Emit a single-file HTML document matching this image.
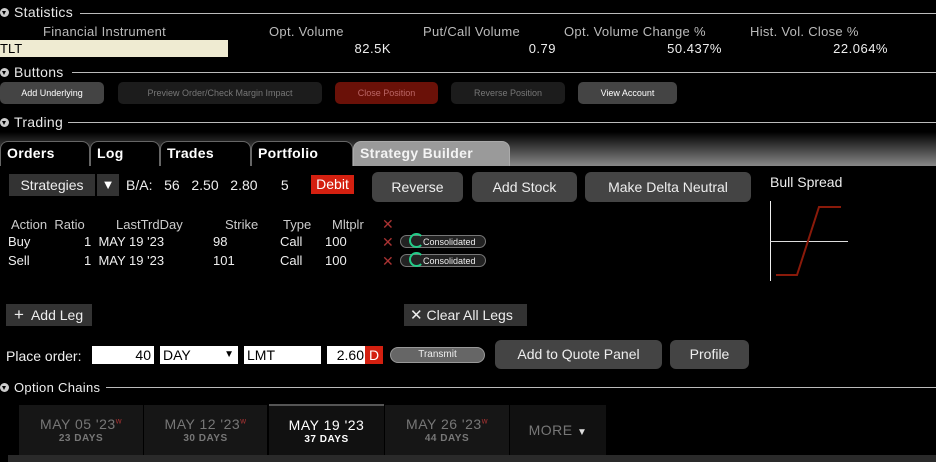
<!DOCTYPE html>
<html><head><style>
body{margin:0;width:936px;height:462px;background:#000;overflow:hidden;font-family:"Liberation Sans","DejaVu Sans",sans-serif;color:#ddd;position:relative}
.a{position:absolute;white-space:nowrap}
.hd{font-size:14px;color:#e8e8e8;letter-spacing:0.3px}
.tri{position:absolute;width:9px;height:9px;border-radius:50%;background:#ccc}
.tri:after{content:"";position:absolute;left:2px;top:3px;border-left:2.5px solid transparent;border-right:2.5px solid transparent;border-top:4px solid #000}
.ln{position:absolute;height:1px;background:#bbb}
.ch{font-size:13px;color:#bbb;letter-spacing:0.3px}
.val{font-size:13px;color:#eee;text-align:right;letter-spacing:0.5px}
.b1{position:absolute;height:22px;top:82px;border-radius:5px;font-size:9px;text-align:center;line-height:22px}
.tab{position:absolute;top:141px;height:25px;background:#000;border:1px solid #666;border-bottom:none;border-radius:8px 8px 0 0;font-weight:bold;font-size:14px;color:#fff;line-height:22px;padding-left:6px;box-sizing:border-box;letter-spacing:0.3px}
.rb{position:absolute;background:#444;border-radius:6px;font-size:14px;color:#eee;text-align:center}
.t{font-size:13px;color:#eee}
.cons{position:absolute;width:86px;height:13px;border-radius:7px;background:#222;border:1px solid #777;font-size:9px;color:#eee;line-height:13px;text-indent:22px;box-sizing:border-box}
.cons:before{content:"";position:absolute;left:8px;top:-3px;width:11px;height:11px;border:2px solid #2c8;border-radius:50%;border-right-color:transparent}
.x{position:absolute;color:#a33;font-size:14px;font-weight:bold}
.inp{position:absolute;top:346px;height:18px;background:#fff;color:#000;font-size:14px;line-height:18px;box-sizing:border-box}
.dt{position:absolute;top:405px;height:50px;background:#161616;text-align:center;color:#777}
.dt b{display:block;font-weight:normal;font-size:14px;margin-top:11px;letter-spacing:0.5px}
.dt i{display:block;font-style:normal;font-size:10px;margin-top:1px;font-weight:bold;letter-spacing:0.5px}
.dt sup{color:#a33;font-size:8px}
</style></head><body>
<div class="tri" style="left:0;top:8px"></div><div class="a hd" style="left:14px;top:4px">Statistics</div><div class="ln" style="left:80px;right:0;top:13px"></div>
<div class="a ch" style="left:43px;top:24px">Financial Instrument</div>
<div class="a ch" style="left:269px;top:24px">Opt. Volume</div>
<div class="a ch" style="left:423px;top:24px">Put/Call Volume</div>
<div class="a ch" style="left:564px;top:24px">Opt. Volume Change %</div>
<div class="a ch" style="left:750px;top:24px">Hist. Vol. Close %</div>
<div class="a" style="left:0;top:40px;width:228px;height:17px;background:#efebd2;color:#000;font-size:13px;line-height:17px">TLT</div>
<div class="a val" style="right:545px;top:41px">82.5K</div>
<div class="a val" style="right:380px;top:41px">0.79</div>
<div class="a val" style="right:214px;top:41px">50.437%</div>
<div class="a val" style="right:48px;top:41px">22.064%</div>
<div class="tri" style="left:0;top:68px"></div><div class="a hd" style="left:14px;top:64px">Buttons</div><div class="ln" style="left:72px;right:0;top:72px"></div>
<div class="b1" style="left:0;width:104px;background:#444;color:#fff">Add Underlying</div>
<div class="b1" style="left:118px;width:204px;background:#1c1c1c;color:#777">Preview Order/Check Margin Impact</div>
<div class="b1" style="left:335px;width:103px;background:#6a1108;color:#b66">Close Position</div>
<div class="b1" style="left:451px;width:114px;background:#1c1c1c;color:#777">Reverse Position</div>
<div class="b1" style="left:578px;width:99px;background:#444;color:#fff">View Account</div>
<div class="a" style="left:0;top:126px;width:936px;height:40px;background:linear-gradient(#000 0,#000 15%,#888)"></div>
<div class="tri" style="left:0;top:118px"></div><div class="a hd" style="left:14px;top:114px">Trading</div><div class="ln" style="left:68px;right:0;top:122px"></div>
<div class="tab" style="left:0;width:90px">Orders</div>
<div class="tab" style="left:90px;width:70px">Log</div>
<div class="tab" style="left:160px;width:91px">Trades</div>
<div class="tab" style="left:251px;width:102px">Portfolio</div>
<div class="tab" style="left:353px;width:157px;background:#9a9a9a;border-color:#aaa;color:#f4f4f4">Strategy Builder</div>
<div class="a" style="left:0;top:166px;width:936px;height:2px;background:#000"></div>
<div class="a" style="left:9px;top:174px;width:86px;height:22px;background:#333;font-size:14px;line-height:22px;text-align:center;color:#eee">Strategies</div>
<div class="a" style="left:97px;top:174px;width:22px;height:22px;background:#333;font-size:13px;line-height:22px;text-align:center;color:#fff">▼</div>
<div class="a t" style="left:126px;top:177px;font-size:14px">B/A:&nbsp;&nbsp;&nbsp;56&nbsp;&nbsp;&nbsp;2.50&nbsp;&nbsp;&nbsp;2.80&nbsp;&nbsp;&nbsp;&nbsp;&nbsp;&nbsp;5</div>
<div class="a" style="left:311px;top:175px;width:43px;height:19px;background:#d42010;color:#fff;font-size:14px;line-height:19px;text-align:center">Debit</div>
<div class="rb" style="left:372px;top:172px;width:91px;height:30px;line-height:30px">Reverse</div>
<div class="rb" style="left:472px;top:172px;width:105px;height:30px;line-height:30px">Add Stock</div>
<div class="rb" style="left:585px;top:172px;width:166px;height:30px;line-height:30px">Make Delta Neutral</div>
<div class="a t" style="left:770px;top:174px;font-size:14px">Bull Spread</div>
<svg class="a" style="left:760px;top:195px" width="100" height="95"><line x1="10.5" y1="6" x2="10.5" y2="86" stroke="#eee"/><line x1="10" y1="46.5" x2="88" y2="46.5" stroke="#ddd"/><polyline points="16,80 37,80 59,12 81,12" fill="none" stroke="#8a1a0a" stroke-width="2"/></svg>
<div class="a t" style="left:11px;top:217px;color:#ccc">Action&nbsp; Ratio</div>
<div class="a t" style="left:116px;top:217px;color:#ccc">LastTrdDay</div>
<div class="a t" style="left:225px;top:217px;color:#ccc">Strike</div>
<div class="a t" style="left:283px;top:217px;color:#ccc">Type</div>
<div class="a t" style="left:332px;top:217px;color:#ccc">Mltplr</div>
<div class="x" style="left:382px;top:216px">✕</div>
<div class="a t" style="left:8px;top:234px">Buy</div><div class="a t" style="left:84px;top:234px">1&nbsp; MAY 19 '23</div><div class="a t" style="left:213px;top:234px">98</div><div class="a t" style="left:280px;top:234px">Call</div><div class="a t" style="left:325px;top:234px">100</div>
<div class="x" style="left:382px;top:234px">✕</div><div class="cons" style="left:400px;top:235px">Consolidated</div>
<div class="a t" style="left:8px;top:253px">Sell</div><div class="a t" style="left:84px;top:253px">1&nbsp; MAY 19 '23</div><div class="a t" style="left:213px;top:253px">101</div><div class="a t" style="left:280px;top:253px">Call</div><div class="a t" style="left:325px;top:253px">100</div>
<div class="x" style="left:382px;top:253px">✕</div><div class="cons" style="left:400px;top:254px">Consolidated</div>
<div class="a" style="left:6px;top:304px;width:86px;height:22px;background:#333;font-size:14px;line-height:22px;color:#eee;text-indent:8px"><span style="font-size:17px">+</span>&nbsp; Add Leg</div>
<div class="a" style="left:404px;top:304px;width:123px;height:22px;background:#333;font-size:14px;line-height:22px;color:#eee;text-indent:6px"><span style="font-size:15px">✕</span>&nbsp;Clear All Legs</div>
<div class="a t" style="left:6px;top:348px;font-size:14px">Place order:</div>
<div class="inp" style="left:92px;width:62px;text-align:right;padding-right:3px">40</div>
<div class="inp" style="left:160px;width:78px;padding-left:3px">DAY<span style="position:absolute;right:4px;top:0;font-size:10px">▼</span></div>
<div class="inp" style="left:244px;width:77px;padding-left:3px">LMT</div>
<div class="inp" style="left:327px;width:38px;text-align:right;padding-right:1px">2.60</div>
<div class="inp" style="left:365px;width:18px;background:#d42010;color:#fff;text-align:center">D</div>
<div class="a" style="left:390px;top:347px;width:95px;height:16px;border-radius:8px;background:#666;border:1px solid #999;box-sizing:border-box;font-size:10px;line-height:14px;text-align:center;color:#eee">Transmit</div>
<div class="rb" style="left:495px;top:340px;width:167px;height:29px;line-height:29px">Add to Quote Panel</div>
<div class="rb" style="left:670px;top:340px;width:79px;height:29px;line-height:29px">Profile</div>
<div class="tri" style="left:0;top:383px"></div><div class="a t" style="left:14px;top:380px;letter-spacing:0.3px">Option Chains</div><div class="ln" style="left:106px;right:0;top:387px"></div>
<div class="dt" style="left:19px;width:124px"><b>MAY 05 '23<sup>w</sup></b><i>23 DAYS</i></div>
<div class="dt" style="left:144px;width:123px"><b>MAY 12 '23<sup>w</sup></b><i>30 DAYS</i></div>
<div class="dt" style="left:269px;width:115px;top:404px;background:#111;border-top:2px solid #555;color:#fff"><b>MAY 19 '23</b><i>37 DAYS</i></div>
<div class="dt" style="left:385px;width:124px"><b>MAY 26 '23<sup>w</sup></b><i>44 DAYS</i></div>
<div class="dt" style="left:510px;width:96px;background:#111"><b style="margin-top:17px">MORE <span style="font-size:10px;color:#ddd">▼</span></b></div>
<div class="a" style="left:8px;top:455px;width:928px;height:7px;background:#2a2a2a"></div>
</body></html>
